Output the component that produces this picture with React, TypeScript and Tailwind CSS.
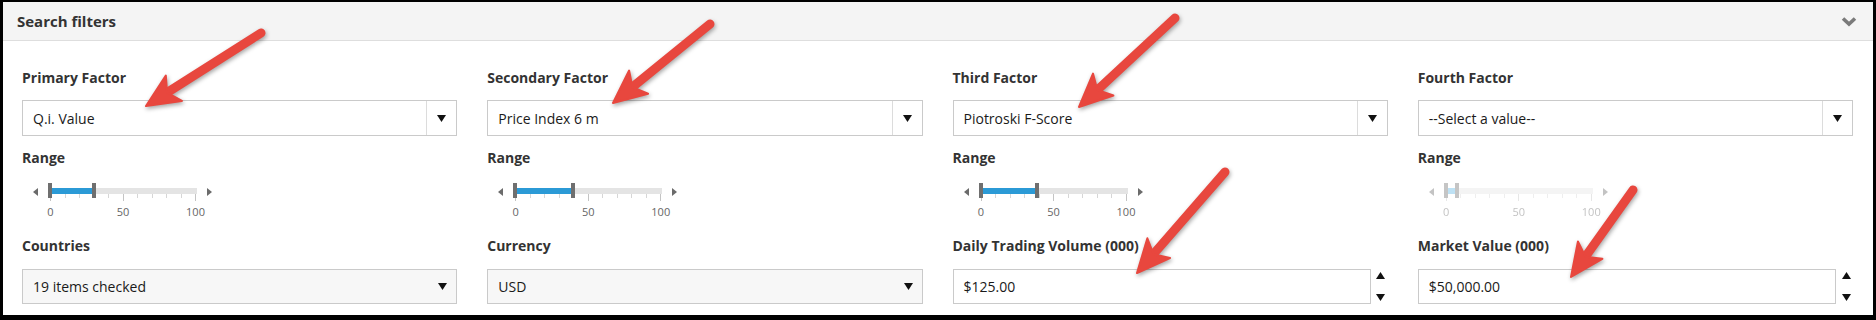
import React from 'react';

const FONT = { fontFamily: '"Open Sans", "Liberation Sans", sans-serif' };

type SliderProps = { value: number; disabled?: boolean };

// small triangles used by the dropdowns and spinners
const Down = ({ w = 9, h = 7 }: { w?: number; h?: number }) => (
  <svg width={w} height={h} viewBox="0 0 9 7">
    <path d="M0 0 H9 L4.5 7 Z" fill="#111" />
  </svg>
);

const Up = ({ w = 9, h = 7 }: { w?: number; h?: number }) => (
  <svg width={w} height={h} viewBox="0 0 9 7">
    <path d="M0 7 H9 L4.5 0 Z" fill="#111" />
  </svg>
);

const RangeSlider: React.FC<SliderProps> = ({ value, disabled }) => {
  const origin = 28;
  const scale = 1.45;
  const ticks = [0, 10, 20, 30, 40, 50, 60, 70, 80, 90, 100];
  const end = origin + value * scale;
  return (
    <div className={`relative h-[68px] ${disabled ? 'opacity-40' : ''}`}>
      {/* arrows */}
      <svg className="absolute left-[11px] top-[20px]" width="5" height="8" viewBox="0 0 5 8">
        <path d="M5 0 V8 L0 4 Z" fill="#6b6b6b" />
      </svg>
      <svg className="absolute left-[185px] top-[20px]" width="5" height="8" viewBox="0 0 5 8">
        <path d="M0 0 V8 L5 4 Z" fill="#6b6b6b" />
      </svg>
      {/* track */}
      <div className="absolute left-[26px] top-[20px] h-[6px] w-[149px] bg-[#e4e4e4]" />
      <div
        className={`absolute top-[20px] h-[6px] ${disabled ? 'bg-[#5fb6e6]' : 'bg-[#2b9ad6]'}`}
        style={{ left: origin, width: end - origin }}
      />
      {/* ticks */}
      {ticks.map(t => (
        <div
          key={t}
          className={`absolute top-[26px] w-px ${t % 50 === 0 ? 'h-[7px] bg-[#c4c4c4]' : 'h-[4px] bg-[#d6d6d6]'}`}
          style={{ left: origin + t * scale }}
        />
      ))}
      {[0, 50, 100].map(t => (
        <span
          key={t}
          className="absolute top-[36px] -translate-x-1/2 text-[11px] leading-4 text-[#666]"
          style={{ left: origin + t * scale + 0.5 }}
        >
          {t}
        </span>
      ))}
      {/* handles */}
      <div className="absolute left-[26px] top-[15px] h-[15px] w-[4px] bg-[#6f6f6f]" />
      <div className="absolute top-[15px] h-[15px] w-[4px] bg-[#6f6f6f]" style={{ left: end - 2 }} />
    </div>
  );
};

const FactorSelect = ({ value }: { value: string }) => (
  <div className="flex h-9 border border-[#cacaca] bg-white">
    <div className="flex flex-1 items-center pl-[10px] text-[14px] text-[#1a1a1a]">{value}</div>
    <div className="flex w-[30px] items-center justify-center border-l border-[#dcdcdc]">
      <Down />
    </div>
  </div>
);

const PlainSelect = ({ value }: { value: string }) => (
  <div className="flex h-[35px] items-center justify-between border border-[#cacaca] bg-[#f7f7f7] pl-[10px] pr-[9px] text-[14px] text-[#1a1a1a]">
    <span>{value}</span>
    <Down />
  </div>
);

const NumberInput = ({ value }: { value: string }) => (
  <div className="flex h-[35px]">
    <div className="flex flex-1 items-center border border-[#cacaca] bg-white pl-[10px] text-[14px] text-[#1a1a1a]">
      {value}
    </div>
    <div className="flex w-[17px] flex-col items-center justify-between py-[3px] pl-[3px]">
      <Up w={9} h={7} />
      <Down w={9} h={7} />
    </div>
  </div>
);

const Label = ({ children }: { children: React.ReactNode }) => (
  <div className="h-5 text-[14px] font-bold leading-5 text-[#333]">{children}</div>
);

type Col = {
  factor: string;
  value: string;
  range: number;
  disabled?: boolean;
  bottomLabel: string;
  bottom: React.ReactNode;
};

const COLUMNS: Col[] = [
  { factor: 'Primary Factor', value: 'Q.i. Value', range: 30, bottomLabel: 'Countries', bottom: <PlainSelect value="19 items checked" /> },
  { factor: 'Secondary Factor', value: 'Price Index 6 m', range: 40, bottomLabel: 'Currency', bottom: <PlainSelect value="USD" /> },
  { factor: 'Third Factor', value: 'Piotroski F-Score', range: 39, bottomLabel: 'Daily Trading Volume (000)', bottom: <NumberInput value="$125.00" /> },
  { factor: 'Fourth Factor', value: '--Select a value--', range: 8, disabled: true, bottomLabel: 'Market Value (000)', bottom: <NumberInput value="$50,000.00" /> },
];

// red annotation arrows drawn over the form
const ARROWS = [
  [261, 33, 146, 106],
  [710, 24, 613, 103],
  [1175, 18, 1079, 107],
  [1225, 172, 1137, 273],
  [1633, 190, 1571, 277],
];

const Arrow = ({ a }: { a: number[] }) => {
  const [x1, y1, x2, y2] = a;
  const len = Math.hypot(x2 - x1, y2 - y1);
  const dx = (x2 - x1) / len;
  const dy = (y2 - y1) / len;
  const L = 30;
  const W = 15;
  const bx = x2 - dx * L;
  const by = y2 - dy * L;
  const nx = -dy;
  const ny = dx;
  return (
    <g>
      <line x1={x1} y1={y1} x2={bx + dx * 6} y2={by + dy * 6} stroke="#e8473e" strokeWidth={9} strokeLinecap="round" />
      <path
        d={`M${x2} ${y2} L${bx + nx * W - dx * 3} ${by + ny * W - dy * 3} L${bx + dx * 5} ${by + dy * 5} L${bx - nx * W - dx * 3} ${by - ny * W - dy * 3} Z`}
        fill="#e8473e"
        stroke="#e8473e"
        strokeWidth={2}
        strokeLinejoin="round"
      />
    </g>
  );
};

export default function App() {
  return (
    <div className="relative h-[320px] w-[1876px] overflow-hidden bg-black" style={FONT}>
      <div className="flex h-full flex-col border-t-2 border-r-[3px] border-b-[5px] border-l-[3px] border-black bg-white">
        {/* Header */}
        <div className="flex h-[39px] items-center justify-between border-b border-[#dedede] bg-[#f4f4f4] pl-[14px] pr-[16px]">
          <h3 className="text-[15px] font-bold text-[#333]">Search filters</h3>
          <svg width="16" height="11" viewBox="0 0 16 11" className="mt-px">
            <path d="M2 2.5 L8 8 L14 2.5" fill="none" stroke="#7a7a7a" strokeWidth="3.6" />
          </svg>
        </div>

        {/* Body */}
        <div className="grid flex-1 grid-cols-4 gap-x-[30px] pt-[27px] pr-[20px] pl-[19px]">
          {COLUMNS.map(c => (
            <div key={c.factor} className="flex flex-col">
              <Label>{c.factor}</Label>
              <div className="mt-3">
                <FactorSelect value={c.value} />
              </div>
              <div className="mt-3">
                <Label>Range</Label>
              </div>
              <RangeSlider value={c.range} disabled={c.disabled} />
              <Label>{c.bottomLabel}</Label>
              <div className="mt-[13px]">{c.bottom}</div>
            </div>
          ))}
        </div>
      </div>

      <svg
        className="pointer-events-none absolute inset-0 drop-shadow-[1px_2px_2px_rgba(0,0,0,0.35)]"
        width="1876"
        height="320"
      >
        {ARROWS.map((a, i) => (
          <Arrow key={i} a={a} />
        ))}
      </svg>
    </div>
  );
}
